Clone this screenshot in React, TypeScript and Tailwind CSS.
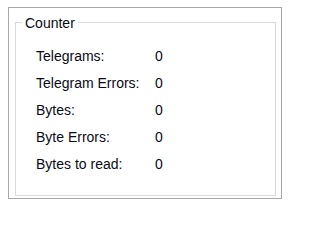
const rows = [
  { label: "Telegrams:", value: 0 },
  { label: "Telegram Errors:", value: 0 },
  { label: "Bytes:", value: 0 },
  { label: "Byte Errors:", value: 0 },
  { label: "Bytes to read:", value: 0 },
];

export default function App() {
  return (
    <div className="w-[293px] h-[205px] bg-white pl-[8px] pt-[7px] font-['Liberation_Sans',Arial,sans-serif] text-[14px] text-[#0a0a14]">
      {/* outer panel */}
      <div className="w-[274px] h-[192px] border border-[#a8a8a8] pl-[6px] pr-[5px] pt-[14px] pb-[2px]">
        {/* group box */}
        <div className="relative h-full border border-[#d9d9d9] pl-[20px] pt-[20px]">
          <span className="absolute -top-[8px] left-[6px] px-[3px] bg-white leading-[16px]">Counter</span>
          <div className="flex flex-col">
            {rows.map((r) => (
              <div key={r.label} className="flex h-[27px] items-center">
                <span className="w-[119px]">{r.label}</span>
                <span>{r.value}</span>
              </div>
            ))}
          </div>
        </div>
      </div>
    </div>
  );
}
